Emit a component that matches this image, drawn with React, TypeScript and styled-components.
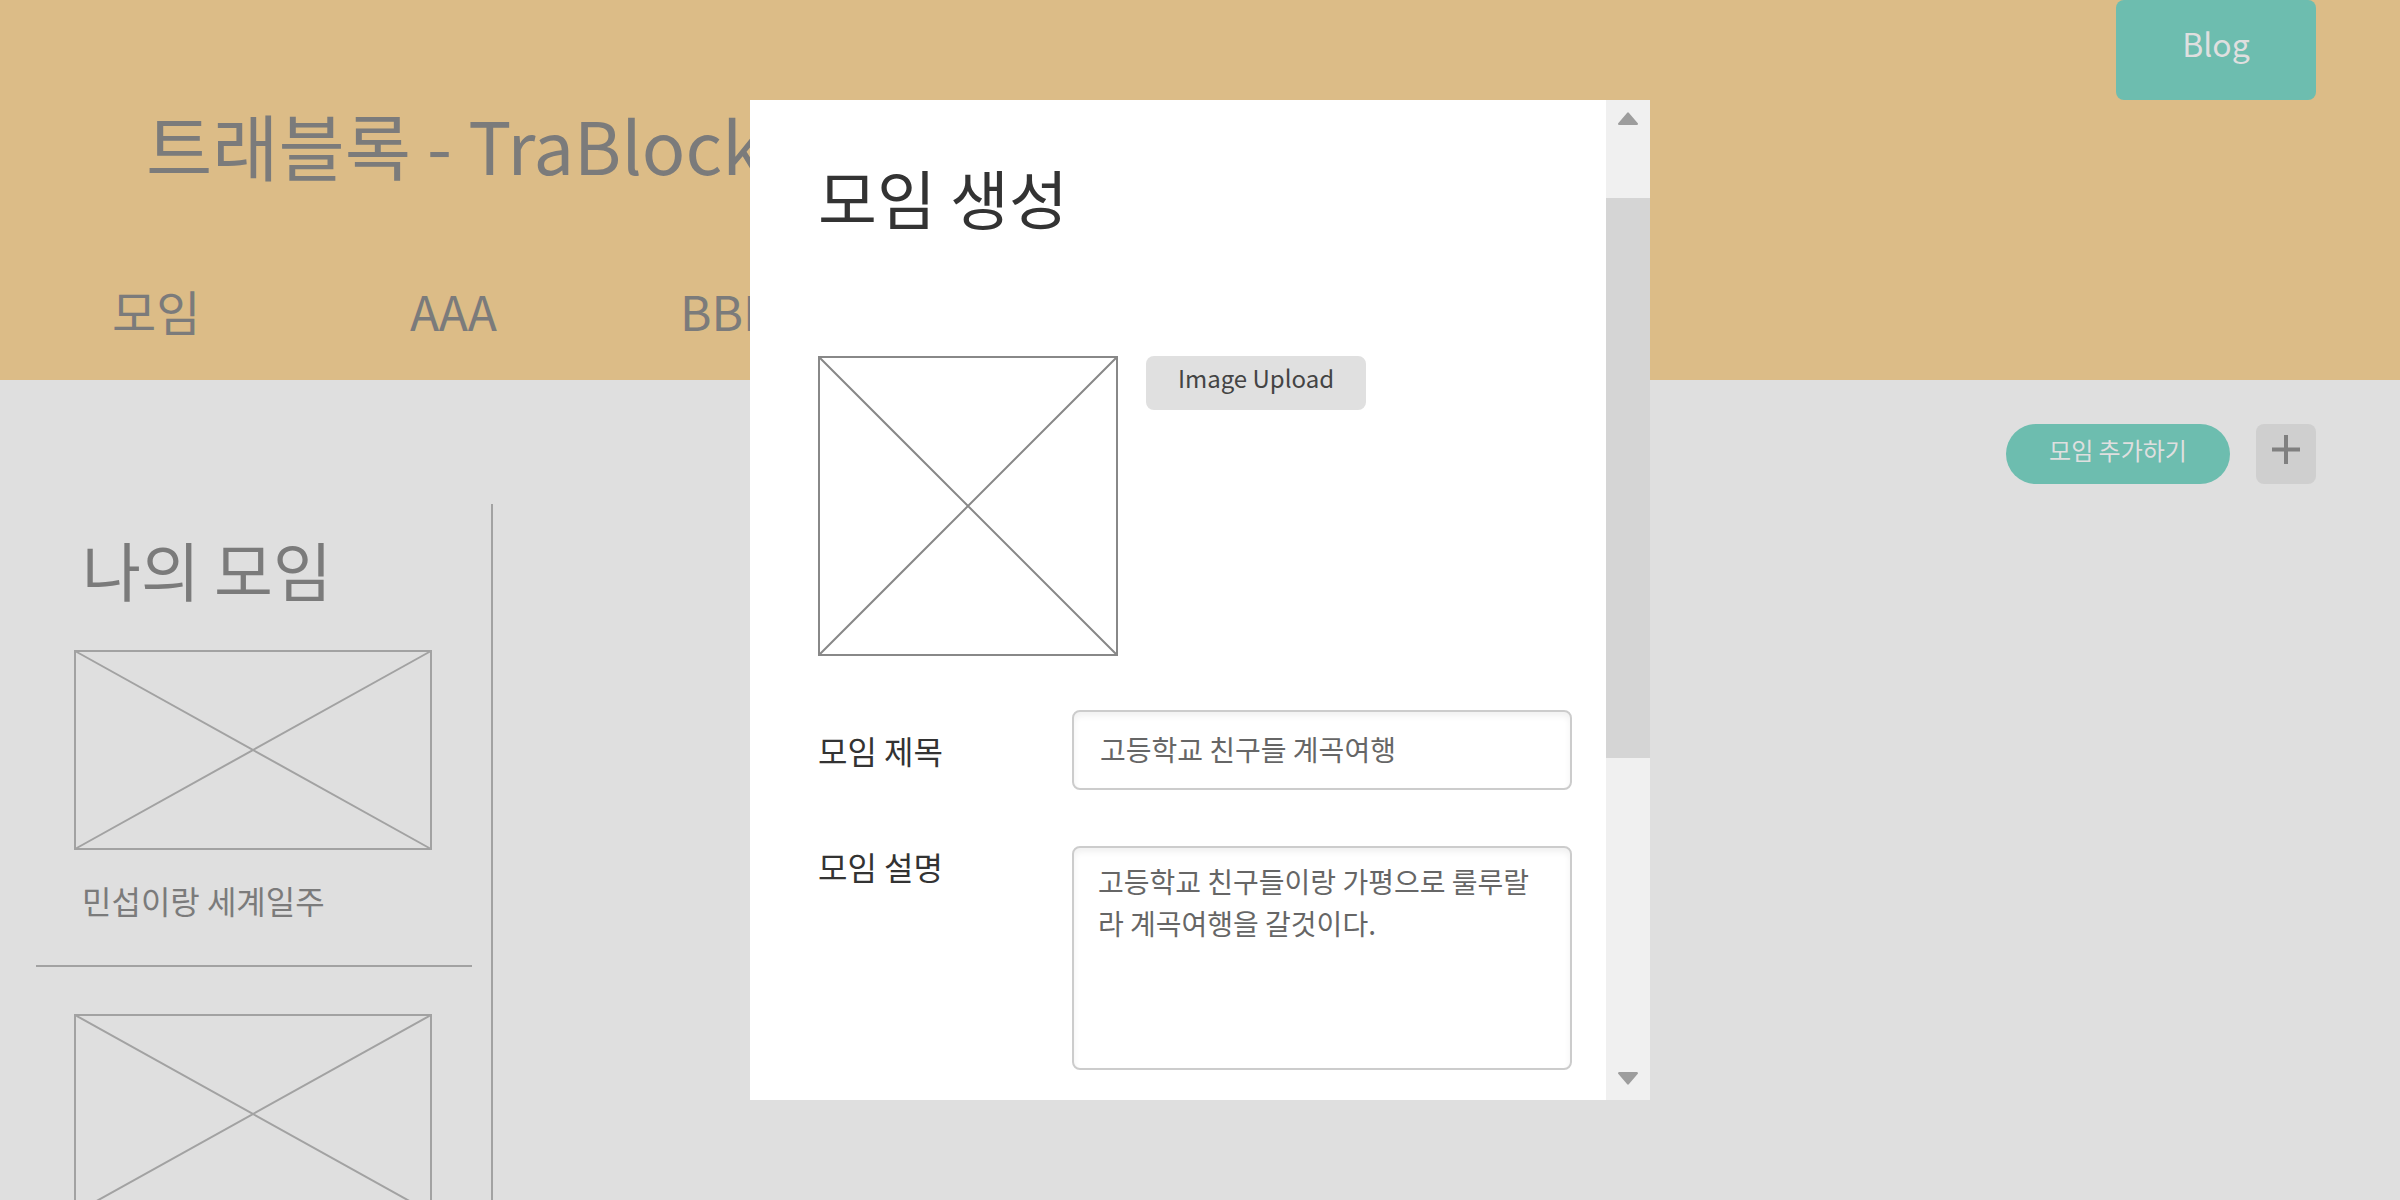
import React from "react";
import styled, { createGlobalStyle } from "styled-components";

const GlobalStyle = createGlobalStyle`
  * { box-sizing: border-box; }
  html, body { margin: 0; height: 100%; overflow: hidden; }
  body, button, input, textarea {
    font-family: "Noto Sans CJK KR", "Noto Sans", sans-serif;
    font-weight: 400;
  }
  h1, h2, p, ul { margin: 0; padding: 0; font-weight: 400; }
  ul { list-style: none; }
  button { border: 0; padding: 0; cursor: pointer; }
`;

const Page = styled.div`
  height: 100vh;
  display: flex;
  flex-direction: column;
  overflow: hidden;
  background: #dfdfdf;
  color: #7b7b7b;
`;

const Header = styled.header`
  display: flex;
  justify-content: space-between;
  align-items: flex-start;
  flex-shrink: 0;
  padding: 0 84px 34px 112px;
  background: #dcbc87;
`;

const Brand = styled.div`
  padding-top: 90px;
`;

const SiteTitle = styled.h1`
  padding-left: 34px;
  font-size: 72px;
  line-height: 108px;
  white-space: nowrap;
`;

const Nav = styled.nav`
  display: grid;
  grid-template-columns: 298px 270px auto;
  margin-top: 76px;
`;

const NavLink = styled.a`
  color: inherit;
  font-size: 48px;
  line-height: 72px;
  text-decoration: none;
`;

const BlogButton = styled.button`
  width: 200px;
  height: 100px;
  padding-bottom: 15px;
  border-radius: 8px;
  background: #6dbdaf;
  color: #dfdfdf;
  font-size: 32px;
  line-height: 48px;
`;

const Main = styled.main`
  flex: 1;
  min-height: 0;
  display: flex;
  flex-direction: column;
  padding-top: 44px;
`;

const Actions = styled.div`
  display: flex;
  justify-content: flex-end;
  flex-shrink: 0;
  gap: 26px;
  padding-right: 84px;
`;

const AddButton = styled.button`
  width: 224px;
  height: 60px;
  padding-bottom: 8px;
  border-radius: 30px;
  background: #6dbdaf;
  color: #dfdfdf;
  font-size: 24px;
  line-height: 36px;
`;

const PlusButton = styled.button`
  display: flex;
  justify-content: center;
  width: 60px;
  height: 60px;
  padding-top: 11px;
  border-radius: 8px;
  background: #cfcfcf;
`;

const Sidebar = styled.aside`
  flex: 1;
  min-height: 0;
  width: 493px;
  margin-top: 20px;
  padding: 16px 19px 0 36px;
  border-right: 2px solid #a2a2a2;
  overflow: hidden;
`;

const SidebarTitle = styled.h2`
  padding-left: 46px;
  font-size: 64px;
  line-height: 96px;
`;

const GroupItem = styled.li`
  padding: 0 0 41px 38px;
  margin-bottom: 47px;
  border-bottom: 2px solid #a2a2a2;
`;

const GroupName = styled.p`
  padding: 26px 0 0 8px;
  font-size: 32px;
  line-height: 48px;
`;

const GroupList = styled.ul`
  margin-top: 34px;
`;

const Frame = styled.svg`
  display: block;
  flex-shrink: 0;
`;

const Overlay = styled.div`
  position: fixed;
  inset: 0;
  display: flex;
  align-items: center;
  justify-content: center;
`;

const Dialog = styled.section`
  display: flex;
  width: 900px;
  max-width: 100%;
  height: calc(100vh - 200px);
  background: #fff;
  color: #333;
`;

const DialogBody = styled.form`
  flex: 1;
  min-width: 0;
  overflow: hidden;
  padding: 48px 34px 30px 68px;
`;

const DialogTitle = styled.h2`
  font-size: 64px;
  line-height: 96px;
`;

const UploadRow = styled.div`
  display: flex;
  align-items: flex-start;
  gap: 28px;
  margin-top: 112px;
`;

const UploadButton = styled.button`
  width: 220px;
  height: 54px;
  padding-bottom: 10px;
  border-radius: 8px;
  background: #e0e0e0;
  color: #444;
  font-size: 24px;
  line-height: 36px;
`;

const Field = styled.div<{ $top: number; $align: string }>`
  display: flex;
  align-items: ${(p) => p.$align};
  justify-content: space-between;
  margin-top: ${(p) => p.$top}px;
`;

const Label = styled.label`
  font-size: 32px;
  line-height: 48px;
`;

const TextInput = styled.input`
  width: 500px;
  height: 80px;
  padding: 0 26px 2px;
  border: 2px solid #ccc;
  border-radius: 8px;
  outline: 0;
  background: #fff;
  box-shadow: inset 0 4px 6px rgba(0, 0, 0, 0.06);
  color: #666;
  font-size: 28px;
`;

const TextArea = styled.textarea`
  display: block;
  width: 500px;
  height: 224px;
  margin-top: 4px;
  padding: 12px 24px;
  border: 2px solid #ccc;
  border-radius: 8px;
  outline: 0;
  resize: none;
  overflow: hidden;
  background: #fff;
  box-shadow: inset 0 4px 6px rgba(0, 0, 0, 0.06);
  color: #666;
  font-size: 28px;
  line-height: 42px;
  word-break: break-all;
`;

const ScrollBar = styled.div`
  display: flex;
  flex-direction: column;
  width: 44px;
  background: #f0f0f0;
`;

const ScrollArrow = styled.button<{ $height: number }>`
  display: flex;
  align-items: center;
  justify-content: center;
  height: ${(p) => p.$height}px;
  background: transparent;
`;

const ScrollTrack = styled.div`
  flex: 1;
  padding-top: 61px;
`;

const ScrollThumb = styled.div`
  height: 560px;
  background: #d5d5d5;
`;

type PlaceholderProps = { width: number; height: number; color: string };

function Placeholder({ width, height, color }: PlaceholderProps) {
  return (
    <Frame width={width} height={height} fill="none" stroke={color} strokeWidth={2} aria-hidden="true">
      <rect x={1} y={1} width={width - 2} height={height - 2} />
      <path d={`M1 1L${width - 1} ${height - 1}M${width - 1} 1L1 ${height - 1}`} />
    </Frame>
  );
}

function Arrow({ down }: { down?: boolean }) {
  return (
    <svg width="20" height="13" viewBox="0 0 20 13" fill="#9d9d9d" aria-hidden="true">
      {down ? (
        <path d="M1 0H19Q20 0 20 1.5L11 12Q10 13.5 9 12L0 1.5Q0 0 1 0Z" />
      ) : (
        <path d="M1 13H19Q20 13 20 11.5L11 1Q10-.5 9 1L0 11.5Q0 13 1 13Z" />
      )}
    </svg>
  );
}

const groups = ["민섭이랑 세계일주", ""];

export default function App() {
  return (
    <>
      <GlobalStyle />
      <Page>
        <Header>
          <Brand>
            <SiteTitle>트래블록 - TraBlock</SiteTitle>
            <Nav>
              <NavLink href="#groups">모임</NavLink>
              <NavLink href="#aaa">AAA</NavLink>
              <NavLink href="#bbb">BBB</NavLink>
            </Nav>
          </Brand>
          <BlogButton type="button">Blog</BlogButton>
        </Header>
        <Main>
          <Actions>
            <AddButton type="button">모임 추가하기</AddButton>
            <PlusButton type="button" aria-label="추가">
              <svg width="28" height="29" viewBox="0 0 28 29" stroke="#808080" strokeWidth="4" aria-hidden="true">
                <path d="M14 0V29M0 14.5H28" />
              </svg>
            </PlusButton>
          </Actions>
          <Sidebar>
            <SidebarTitle>나의 모임</SidebarTitle>
            <GroupList>
              {groups.map((name, i) => (
                <GroupItem key={i}>
                  <Placeholder width={358} height={200} color="#a2a2a2" />
                  <GroupName>{name}</GroupName>
                </GroupItem>
              ))}
            </GroupList>
          </Sidebar>
        </Main>
      </Page>
      <Overlay>
        <Dialog role="dialog" aria-modal="true" aria-labelledby="dialog-title">
          <DialogBody>
            <DialogTitle id="dialog-title">모임 생성</DialogTitle>
            <UploadRow>
              <Placeholder width={300} height={300} color="#888888" />
              <UploadButton type="button">Image Upload</UploadButton>
            </UploadRow>
            <Field $top={54} $align="center">
              <Label htmlFor="group-title">모임 제목</Label>
              <TextInput id="group-title" defaultValue="고등학교 친구들 계곡여행" />
            </Field>
            <Field $top={52} $align="flex-start">
              <Label htmlFor="group-desc">모임 설명</Label>
              <TextArea id="group-desc" defaultValue="고등학교 친구들이랑 가평으로 룰루랄라 계곡여행을 갈것이다." />
            </Field>
          </DialogBody>
          <ScrollBar>
            <ScrollArrow type="button" aria-label="위로" $height={37}>
              <Arrow />
            </ScrollArrow>
            <ScrollTrack>
              <ScrollThumb />
            </ScrollTrack>
            <ScrollArrow type="button" aria-label="아래로" $height={43}>
              <Arrow down />
            </ScrollArrow>
          </ScrollBar>
        </Dialog>
      </Overlay>
    </>
  );
}
